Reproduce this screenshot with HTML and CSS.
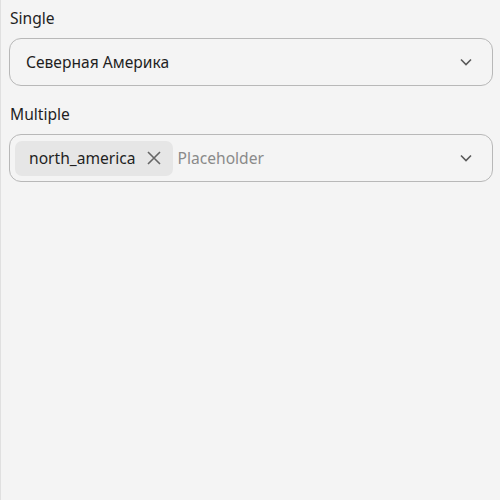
FILE: index.html
```html
<!DOCTYPE html>
<html>
<head>
<meta charset="utf-8">
<link rel="stylesheet" href="styles.css">
</head>
<body>
<div class="panel">
  <div class="field">
    <div class="label">Single</div>
    <div class="select">
      <span class="value">Северная Америка</span>
      <svg class="chevron" width="12" height="8" viewBox="0 0 12 8"><path d="M1 1.5 L6 6.5 L11 1.5" fill="none" stroke="#5a5a5a" stroke-width="1.6"/></svg>
    </div>
  </div>
  <div class="field">
    <div class="label">Multiple</div>
    <div class="select multi">
      <span class="chip">north_america<svg class="x" width="16" height="16" viewBox="0 0 16 16"><path d="M2 2 L14 14 M14 2 L2 14" stroke="#666" stroke-width="1.6" fill="none"/></svg></span>
      <span class="placeholder">Placeholder</span>
      <svg class="chevron" width="12" height="8" viewBox="0 0 12 8"><path d="M1 1.5 L6 6.5 L11 1.5" fill="none" stroke="#5a5a5a" stroke-width="1.6"/></svg>
    </div>
  </div>
</div>
</body>
</html>
```
FILE: styles.css
```css
html, body {
  margin: 0;
  padding: 0;
  height: 100%;
  background: #f4f4f4;
}
body {
  font-family: "Noto Sans", "DejaVu Sans", sans-serif;
  font-size: 15.6px;
  color: #1f1f1f;
}
.panel {
  box-sizing: border-box;
  height: 100%;
  border-left: 1px solid #e0e0e0;
  padding: 7px 7px 0 8px;
  display: flex;
  flex-direction: column;
  gap: 17px;
}
.field {
  display: flex;
  flex-direction: column;
  gap: 9px;
}
.label {
  line-height: 22px;
  padding-left: 1px;
}
.select {
  box-sizing: border-box;
  height: 48px;
  border: 1px solid #b8b8b8;
  border-radius: 12px;
  display: flex;
  align-items: center;
  padding: 0 20px 0 16px;
}
.value {
  flex: 1;
}
.multi {
  padding-left: 5px;
}
.chip {
  display: flex;
  align-items: center;
  gap: 10px;
  background: #e6e6e6;
  border-radius: 7px;
  height: 35px;
  padding: 0 11px 0 14px;
}
.placeholder {
  flex: 1;
  color: #8a8a8a;
  margin-left: 5px;
}
```
